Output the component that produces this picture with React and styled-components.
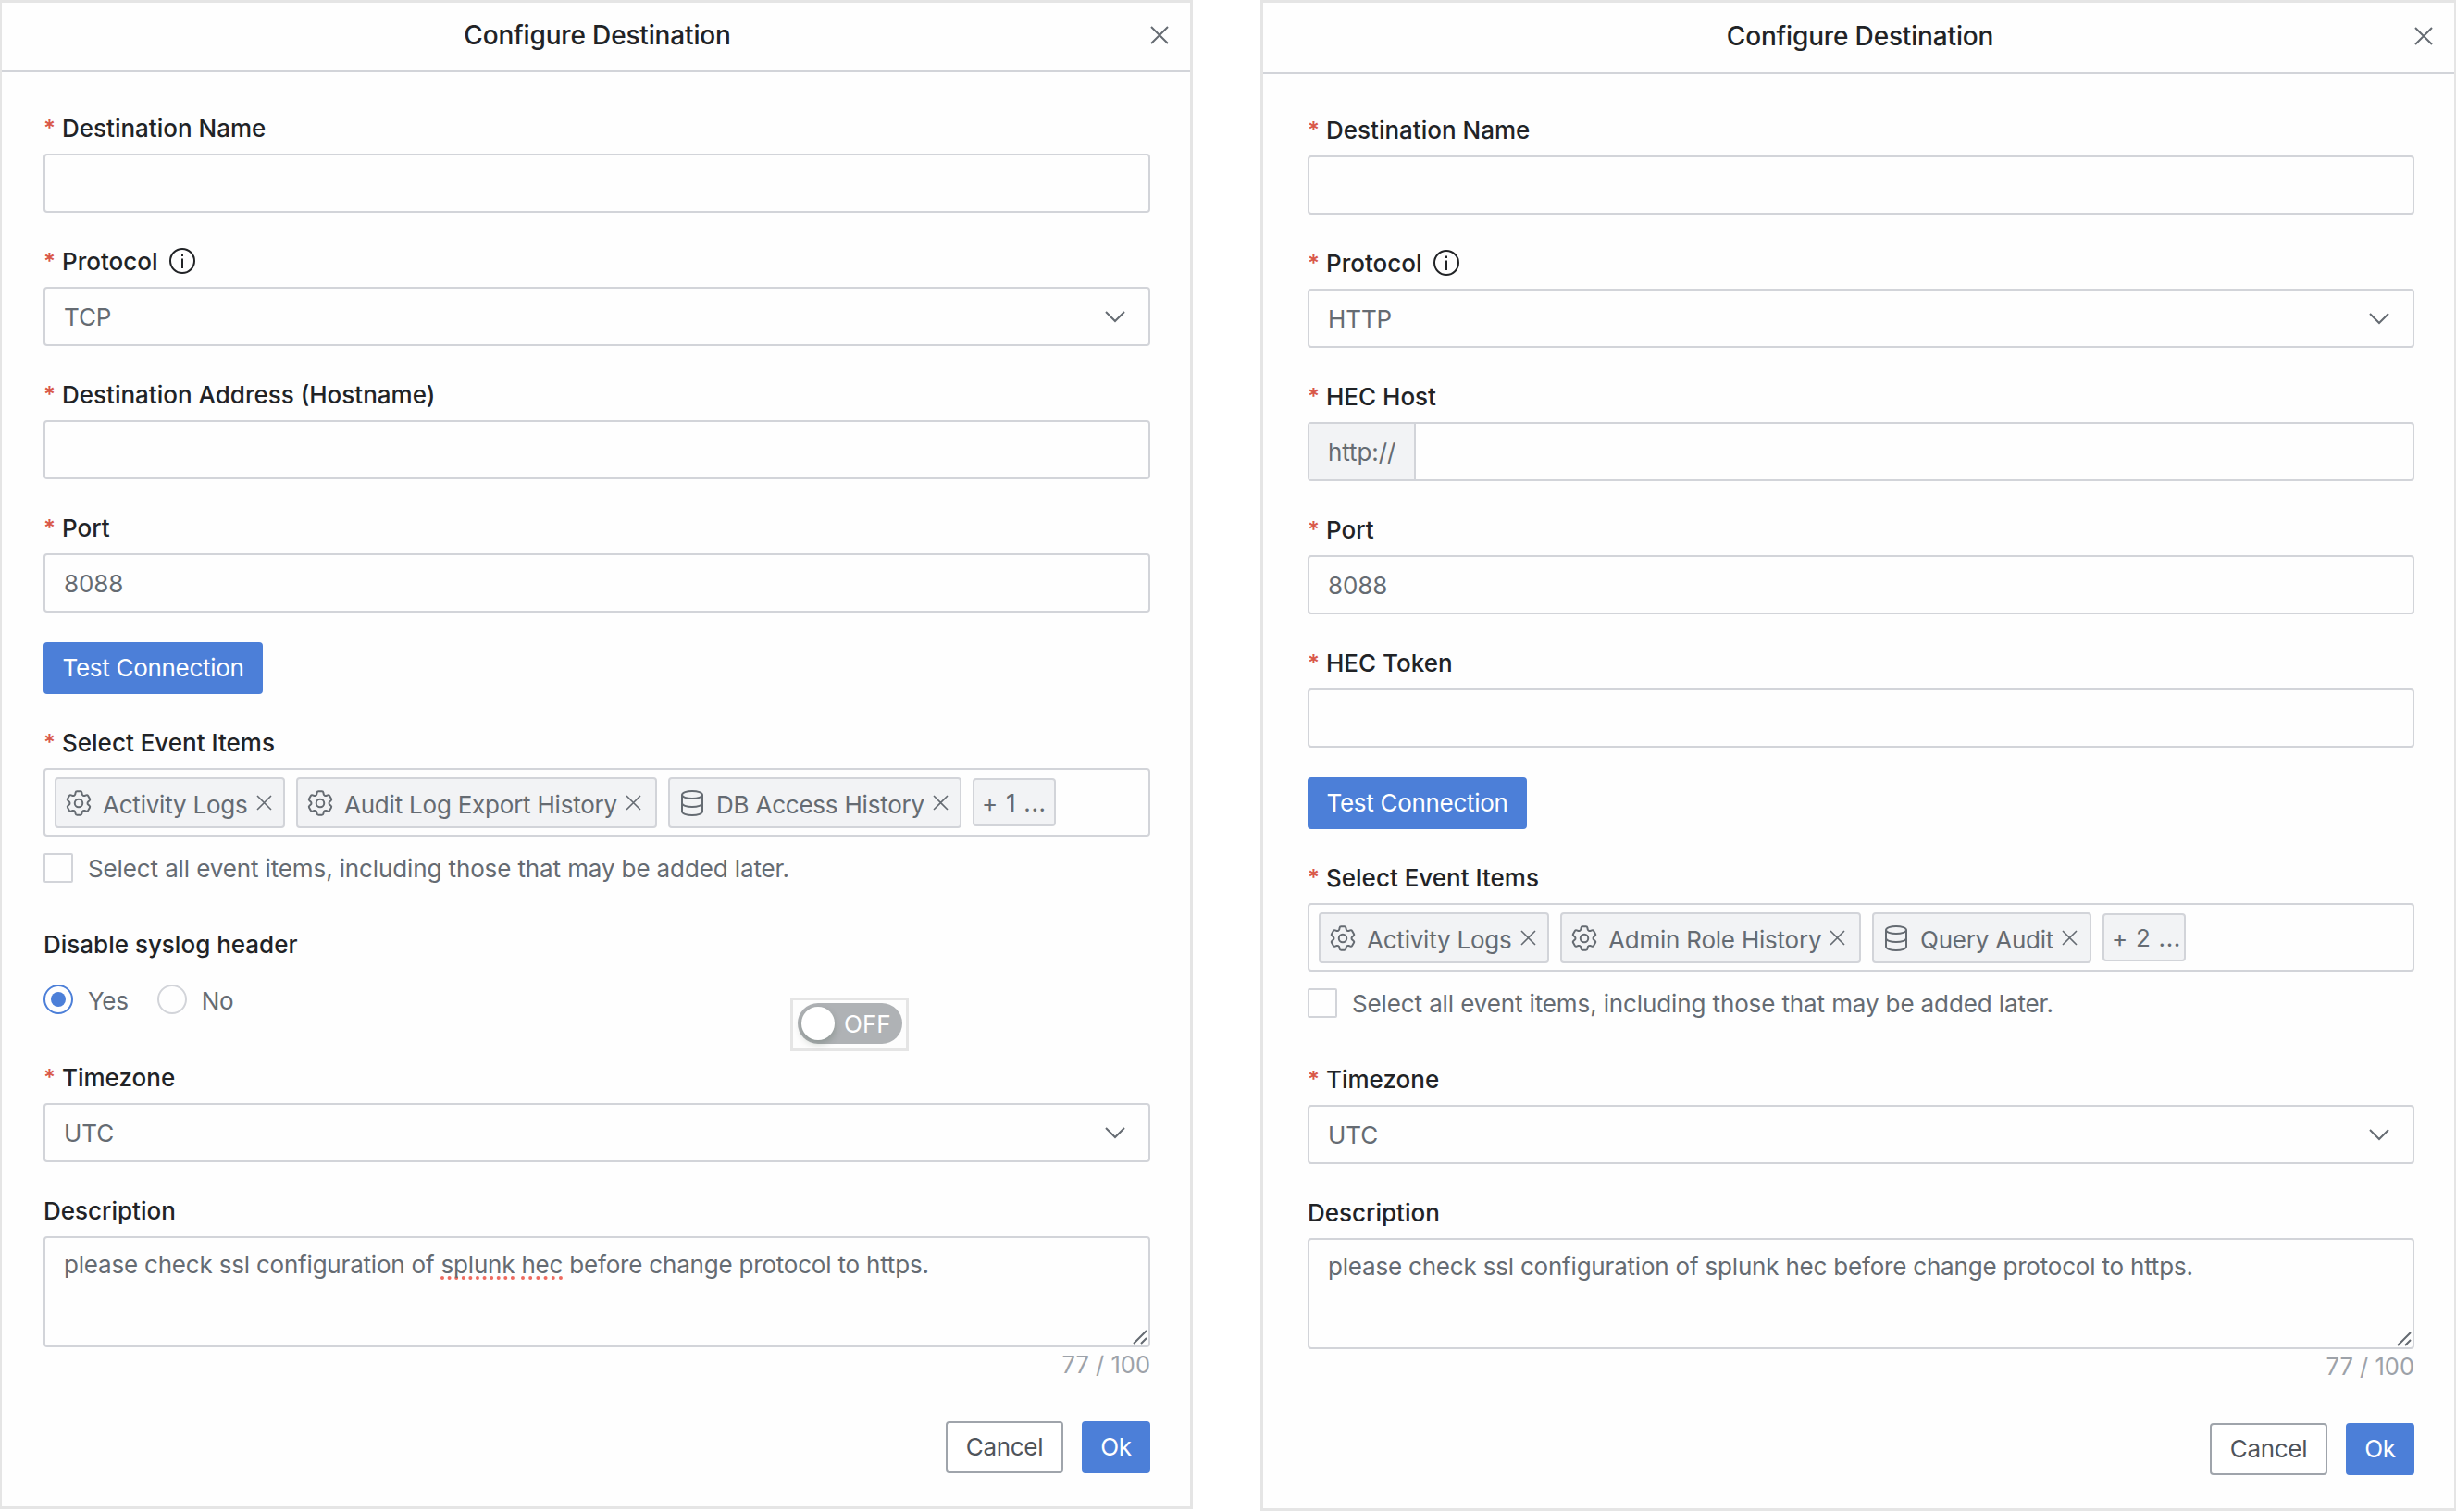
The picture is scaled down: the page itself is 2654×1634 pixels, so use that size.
import React from 'react';
import styled, { createGlobalStyle, css } from 'styled-components';
import { HiOutlineCog6Tooth } from 'react-icons/hi2';

const GlobalStyle = createGlobalStyle`
  * {
    box-sizing: border-box;
  }
  body {
    margin: 0;
    background: #ffffff;
    font-family: Inter, 'Liberation Sans', sans-serif;
    font-size: 26px;
    color: #656b72;
  }
`;

const Page = styled.div`
  display: flex;
  align-items: flex-start;
  gap: 73px;
  width: 2654px;
  height: 1634px;
  overflow: hidden;
`;

const Panel = styled.section`
  position: relative;
  display: flex;
  flex-direction: column;
  width: ${(p) => p.$width}px;
  height: ${(p) => p.$height}px;
  border: solid #e5e5e5;
  border-width: ${(p) => p.$borders};
  background: #fefefe;
`;

const Header = styled.header`
  display: flex;
  align-items: center;
  height: ${(p) => p.$height}px;
  padding: 0 23px 4px 46px;
  border-bottom: 2px solid #d2d4d9;
`;

const Title = styled.h2`
  flex: 1;
  margin: 0;
  font-size: 28px;
  font-weight: 500;
  line-height: 40px;
  letter-spacing: -0.16px;
  text-align: center;
  color: #212326;
`;

const Body = styled.div`
  display: flex;
  flex-direction: column;
  padding: 42px 43px 0 ${(p) => p.$left}px;
`;

const Field = styled.div`
  display: flex;
  flex-direction: column;
  margin-bottom: ${(p) => p.$space || 34}px;
`;

const Label = styled.label`
  display: flex;
  align-items: center;
  height: 38px;
  margin-bottom: 8px;
  padding-bottom: 2px;
  font-weight: 500;
  color: #212326;

  svg {
    margin-left: 12px;
  }
`;

const Star = styled.span`
  width: 20px;
  padding-top: 1px;
  font-size: 24px;
  font-weight: 600;
  line-height: 30px;
  color: #d9584a;
`;

const box = css`
  border: 2px solid #d2d4d9;
  border-radius: 4px;
`;

const Control = styled.div`
  ${box}
  display: flex;
  align-items: center;
  justify-content: space-between;
  height: 64px;
  padding: 0 24px 0 20px;
  letter-spacing: -0.1px;

  svg {
    margin-bottom: 1px;
  }
`;

const AddonControl = styled(Control)`
  justify-content: flex-start;
  padding: 0;
`;

const Addon = styled.span`
  display: flex;
  align-items: center;
  width: 115px;
  height: 100%;
  padding-left: 20px;
  border-right: 2px solid #d2d4d9;
  background: #f2f3f5;
`;

const Button = styled.button`
  width: ${(p) => p.$width}px;
  height: 56px;
  padding: 0 0 1px;
  border: 2px solid ${(p) => (p.$ghost ? '#9fa4ab' : '#4c7fd8')};
  border-radius: 4px;
  background: ${(p) => (p.$ghost ? '#ffffff' : '#4c7fd8')};
  color: ${(p) => (p.$ghost ? '#4f545b' : '#ffffff')};
  font: 440 26px Inter, sans-serif;
  letter-spacing: -0.3px;
  white-space: nowrap;
`;

const TestRow = styled.div`
  display: flex;
  margin: -2px 0 34px;
`;

const Tags = styled.div`
  ${box}
  display: flex;
  align-items: flex-start;
  gap: 12px;
  height: 74px;
  padding: 8px 10px;
`;

const Tag = styled.span`
  ${box}
  display: flex;
  align-items: center;
  width: ${(p) => p.$width}px;
  height: 55px;
  padding: 4px 0 0 10px;
  background: #f2f3f5;
  letter-spacing: -0.22px;
  white-space: nowrap;

  svg {
    flex: none;
    margin-top: -4px;
  }
`;

const TagText = styled.span`
  margin: 0 9px 0 12px;
`;

const MoreTag = styled(Tag)`
  height: 52px;
  margin-top: 1px;
  padding: 0 0 0 8px;
  letter-spacing: 0.7px;
`;

const CheckLine = styled.label`
  display: flex;
  align-items: center;
  gap: 16px;
  height: 32px;
  margin-top: 18px;
  letter-spacing: -0.12px;
`;

const Check = styled.span`
  width: 32px;
  height: 32px;
  border: 2px solid #d2d4d9;
  border-radius: 2px;
`;

const Radios = styled.div`
  display: flex;
  gap: 31px;
  height: 32px;
  margin-top: 16px;
  letter-spacing: -0.3px;
`;

const RadioItem = styled.label`
  display: flex;
  align-items: center;
  gap: 16px;

  span {
    padding-top: 3px;
  }
`;

const Radio = styled.i`
  display: flex;
  align-items: center;
  justify-content: center;
  width: 32px;
  height: 32px;
  border: 2px solid ${(p) => (p.$on ? '#4c7fd8' : '#d2d4d9')};
  border-radius: 50%;

  &::after {
    content: '';
    width: 16px;
    height: 16px;
    border-radius: 50%;
    background: ${(p) => (p.$on ? '#4c7fd8' : 'transparent')};
  }
`;

const TextArea = styled.div`
  ${box}
  display: flex;
  justify-content: space-between;
  height: 120px;
  padding: 10px 1px 1px 20px;
  line-height: 38px;
  letter-spacing: -0.2px;

  svg {
    align-self: flex-end;
  }
`;

const Typo = styled.span`
  text-decoration: underline dotted #ee6a5f 4px;
  text-underline-offset: 3px;
  text-decoration-skip-ink: none;
`;

const Counter = styled.div`
  height: 36px;
  line-height: 36px;
  text-align: right;
  font-size: 25.5px;
  color: #9da2a9;
`;

const Footer = styled.footer`
  display: flex;
  justify-content: flex-end;
  gap: 20px;
  margin-top: 43px;
`;

// the loose switch floats over the form
const SwitchFrame = styled.div`
  position: absolute;
  left: 852px;
  top: 1075px;
  width: 128px;
  height: 58px;
  padding: 3px 5px;
  border: 3px solid #e5e5e5;
  background: #fdfdfd;
`;

const Switch = styled.div`
  display: flex;
  align-items: center;
  gap: 10px;
  width: 113px;
  height: 44px;
  padding-left: 4px;
  border-radius: 22px;
  background: #afb2b5;
  color: #ffffff;
`;

const Knob = styled.i`
  width: 36px;
  height: 36px;
  border-radius: 50%;
  background: #ffffff;
  box-shadow: 0 4px 8px rgba(0, 35, 11, 0.2);
`;

const CogIcon = styled(HiOutlineCog6Tooth)`
  width: 34px;
  height: 34px;
  margin: 0 -3px;
`;

const Svg = ({ size, width, children, stroke = 2 }) => (
  <svg
    width={width || size}
    height={size}
    viewBox={`0 0 ${width || size} ${size}`}
    fill="none"
    stroke="currentColor"
    strokeWidth={stroke}
  >
    {children}
  </svg>
);

const CloseIcon = ({ size, stroke }) => (
  <Svg size={size} stroke={stroke}>
    <path d={`M1 1L${size - 1} ${size - 1}M${size - 1} 1L1 ${size - 1}`} />
  </Svg>
);

const ChevronIcon = () => (
  <Svg size={14} width={24}>
    <path d="M2 2L12 12L22 2" />
  </Svg>
);

const InfoIcon = () => (
  <Svg size={28}>
    <circle cx="14" cy="14" r="13" />
    <path d="M14 11.5V22M14 6.5V9" />
  </Svg>
);

const DatabaseIcon = () => (
  <Svg size={28}>
    <ellipse cx="14" cy="5" rx="11" ry="4" />
    <path d="M3 5V23C3 25.2 7.9 27 14 27S25 25.2 25 23V5" />
    <path d="M3 14C3 16.2 7.9 18 14 18S25 16.2 25 14" />
  </Svg>
);

const ResizeIcon = () => (
  <Svg size={16}>
    <path d="M1 15L15 1M9 15L15 9" />
  </Svg>
);

const FormLabel = ({ required = true, children }) => (
  <Label>
    {required && <Star>*</Star>}
    {children}
  </Label>
);

const EventItems = ({ items, more }) => (
  <Field $space={48}>
    <FormLabel>Select Event Items</FormLabel>
    <Tags>
      {items.map((item) => (
        <Tag key={item.name} $width={item.width}>
          {item.db ? <DatabaseIcon /> : <CogIcon strokeWidth={1.4} />}
          <TagText>{item.name}</TagText>
          <CloseIcon size={17} stroke={1.6} />
        </Tag>
      ))}
      <MoreTag $width={90}>{more}</MoreTag>
    </Tags>
    <CheckLine>
      <Check />
      Select all event items, including those that may be added later.
    </CheckLine>
  </Field>
);

const Ending = ({ spelling }) => (
  <>
    <Field>
      <FormLabel>Timezone</FormLabel>
      <Control>
        UTC
        <ChevronIcon />
      </Control>
    </Field>
    <Field $space={1}>
      <FormLabel required={false}>Description</FormLabel>
      <TextArea>
        <span>
          please check ssl configuration of{' '}
          {spelling ? (
            <>
              <Typo>splunk</Typo> <Typo>hec</Typo>
            </>
          ) : (
            'splunk hec'
          )}{' '}
          before change protocol to https.
        </span>
        <ResizeIcon />
      </TextArea>
    </Field>
    <Counter>77 / 100</Counter>
    <Footer>
      <Button $ghost $width={127}>Cancel</Button>
      <Button $width={74}>Ok</Button>
    </Footer>
  </>
);

const Opening = ({ protocol }) => (
  <>
    <Field>
      <FormLabel>Destination Name</FormLabel>
      <Control />
    </Field>
    <Field>
      <FormLabel>
        Protocol
        <InfoIcon />
      </FormLabel>
      <Control>
        {protocol}
        <ChevronIcon />
      </Control>
    </Field>
  </>
);

const PortField = () => (
  <Field>
    <FormLabel>Port</FormLabel>
    <Control>8088</Control>
  </Field>
);

const TestConnection = () => (
  <TestRow>
    <Button $width={237}>Test Connection</Button>
  </TestRow>
);

const PanelHeader = ({ height }) => (
  <Header $height={height}>
    <Title>Configure Destination</Title>
    <CloseIcon size={20} />
  </Header>
);

const tcpItems = [
  { name: 'Activity Logs', width: 249 },
  { name: 'Audit Log Export History', width: 390 },
  { name: 'DB Access History', width: 317, db: true },
];

const httpItems = [
  { name: 'Activity Logs', width: 249 },
  { name: 'Admin Role History', width: 325 },
  { name: 'Query Audit', width: 237, db: true },
];

export default function App() {
  return (
    <>
      <GlobalStyle />
      <Page>
        <Panel $width={1289} $height={1631} $borders="3px 3px 3px 2px">
          <PanelHeader height={75} />
          <Body $left={45}>
            <Opening protocol="TCP" />
            <Field>
              <FormLabel>Destination Address (Hostname)</FormLabel>
              <Control />
            </Field>
            <PortField />
            <TestConnection />
            <EventItems items={tcpItems} more="+ 1 ..." />
            <Field $space={50}>
              <FormLabel required={false}>Disable syslog header</FormLabel>
              <Radios>
                <RadioItem>
                  <Radio $on />
                  <span>Yes</span>
                </RadioItem>
                <RadioItem>
                  <Radio />
                  <span>No</span>
                </RadioItem>
              </Radios>
            </Field>
            <Ending spelling />
          </Body>
          <SwitchFrame>
            <Switch>
              <Knob />
              OFF
            </Switch>
          </SwitchFrame>
        </Panel>
        <Panel $width={1292} $height={1633} $borders="3px 2px 3px 3px">
          <PanelHeader height={77} />
          <Body $left={48}>
            <Opening protocol="HTTP" />
            <Field>
              <FormLabel>HEC Host</FormLabel>
              <AddonControl>
                <Addon>http://</Addon>
              </AddonControl>
            </Field>
            <PortField />
            <Field>
              <FormLabel>HEC Token</FormLabel>
              <Control />
            </Field>
            <TestConnection />
            <EventItems items={httpItems} more="+ 2 ..." />
            <Ending />
          </Body>
        </Panel>
      </Page>
    </>
  );
}
